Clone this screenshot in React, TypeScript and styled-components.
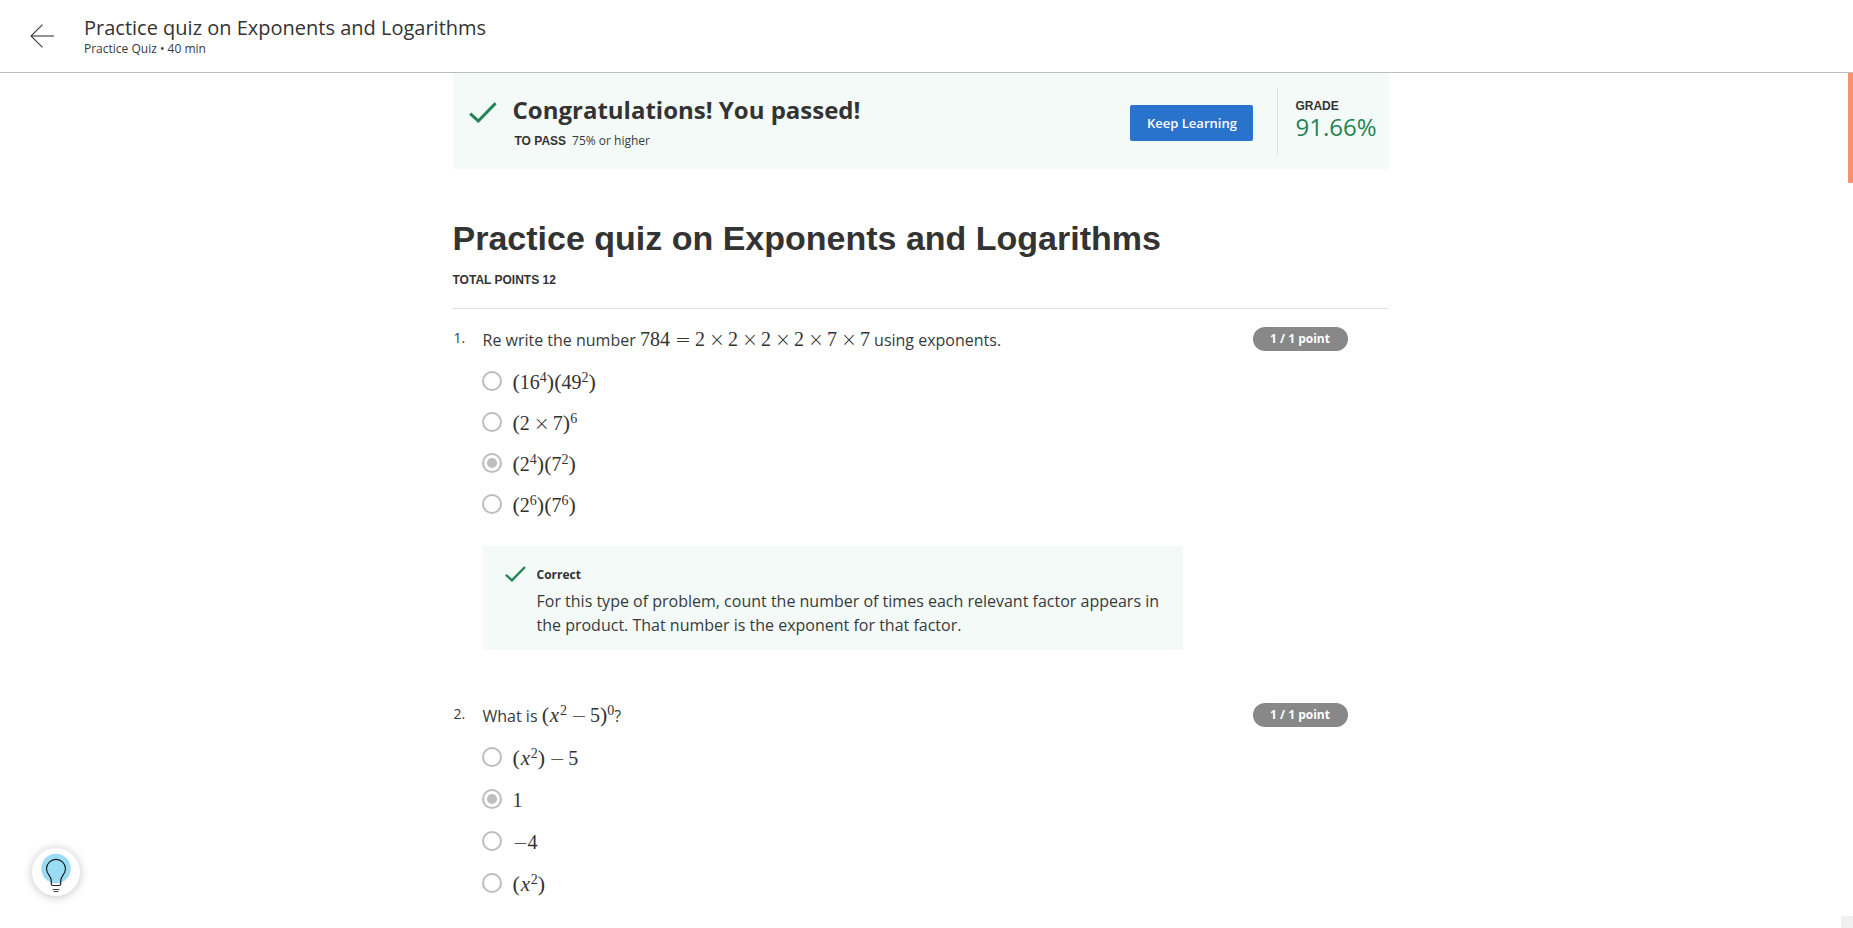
import React from "react";
import styled, { createGlobalStyle } from "styled-components";

const INK = "#373a3c";
const STRONG = "#333333";
const GREEN = "#1f8354";
const MINT = "#f4faf8";
const ARIAL = `"Liberation Sans", Arial, sans-serif`;

const GlobalStyle = createGlobalStyle`
  *, *::before, *::after { box-sizing: border-box; }
  body {
    margin: 0;
    background: #ffffff;
    color: ${INK};
    font-family: "Open Sans", sans-serif;
    font-size: 16px;
    line-height: 24px;
  }
  h1, h2, p, ol, fieldset { margin: 0; padding: 0; border: 0; }
`;

const Header = styled.header`
  display: flex;
  align-items: center;
  gap: 29px;
  height: 73px;
  padding: 0 30px;
  border-bottom: 1px solid #bdbdbd;
`;

const BackButton = styled.button`
  display: flex;
  padding: 0;
  border: 0;
  background: none;
  cursor: pointer;
`;

const HeaderText = styled.div`
  padding-top: 2px;
`;

const HeaderTitle = styled.p`
  font-size: 20px;
  line-height: 24px;
  color: ${STRONG};
`;

const HeaderMeta = styled.p`
  font-size: 12px;
  line-height: 18px;
`;

const Page = styled.div`
  padding-right: 12px;
`;

const Content = styled.main`
  max-width: 936px;
  margin: 0 auto;
`;

const Banner = styled.section`
  display: flex;
  align-items: center;
  height: 96px;
  padding: 0 12px 0 16px;
  background: ${MINT};
`;

const BannerMessage = styled.div`
  display: flex;
  flex: 1;
  align-items: flex-start;
  gap: 16px;
  padding-top: 2px;
`;

const BannerCheck = styled.div`
  display: flex;
  padding-top: 8px;
`;

const BannerTitle = styled.h2`
  font-size: 24px;
  line-height: 32px;
  font-weight: 700;
  color: ${STRONG};
`;

const PassLine = styled.p`
  display: flex;
  gap: 6px;
  padding: 6px 0 0 2px;
  font-size: 12px;
  line-height: 18px;
`;

const Caps = styled.strong`
  display: block;
  font-family: ${ARIAL};
  font-size: 12px;
  line-height: 18px;
  font-weight: 700;
  color: ${STRONG};
`;

const PrimaryButton = styled.button`
  height: 36px;
  width: 123px;
  margin-top: 4px;
  padding: 0;
  border: 0;
  border-radius: 2px;
  background: #2a73cc;
  color: #ffffff;
  font-family: inherit;
  font-size: 13px;
  font-weight: 600;
  cursor: pointer;
`;

const Grade = styled.div`
  display: flex;
  flex-direction: column;
  justify-content: center;
  height: 68px;
  margin-left: 24px;
  padding-left: 17px;
  padding-bottom: 6px;
  border-left: 1px solid #dcdfde;
`;

const GradeValue = styled.span`
  font-size: 24px;
  line-height: 24px;
  color: ${GREEN};
`;

const TitleBlock = styled.div`
  padding: 47px 0 19px;
  border-bottom: 1px solid #e1e1e1;
`;

const QuizTitle = styled.h1`
  margin-bottom: 11px;
  font-family: ${ARIAL};
  font-size: 34px;
  line-height: 44px;
  font-weight: 700;
  color: ${STRONG};
`;

const Questions = styled.ol`
  display: flex;
  flex-direction: column;
  gap: 53px;
  padding: 18px 0 24px;
  list-style: none;
`;

const Question = styled.li`
  display: flex;
  align-items: flex-start;
`;

const Ordinal = styled.span`
  width: 29px;
  padding-left: 1px;
  font-size: 14px;
  line-height: 22px;
`;

const Body = styled.fieldset`
  flex: 1;
  min-width: 0;
`;

const Prompt = styled.legend`
  display: block;
  height: 24px;
  padding: 0 0 0 1px;
  white-space: nowrap;
`;

const Options = styled.div<{ $row: number }>`
  display: grid;
  grid-auto-rows: ${(p) => p.$row}px;
  justify-items: start;
  padding-top: 9px;
`;

const Option = styled.label`
  display: flex;
  align-items: center;
  gap: 11px;
  cursor: pointer;
`;

const Radio = styled.input`
  appearance: none;
  display: grid;
  place-content: center;
  width: 20px;
  height: 20px;
  margin: 0;
  border: 2px solid #bdbdbd;
  border-radius: 50%;
  background: #ffffff;

  &:checked::before {
    content: "";
    width: 10px;
    height: 10px;
    border-radius: 50%;
    background: #bdbdbd;
  }
`;

const Points = styled.span`
  width: 95px;
  height: 24px;
  margin-right: 41px;
  border-radius: 12px;
  background: #888888;
  color: #ffffff;
  font-size: 12px;
  font-weight: 700;
  line-height: 24px;
  text-align: center;
`;

const Feedback = styled.section`
  display: flex;
  align-items: flex-start;
  gap: 11px;
  width: 700px;
  max-width: 100%;
  margin: 22px 0 0 1px;
  padding: 20px 20px 13px 22px;
  background: ${MINT};

  svg {
    flex-shrink: 0;
  }
`;

const FeedbackTitle = styled.strong`
  display: block;
  margin-bottom: 5px;
  font-size: 12px;
  line-height: 18px;
  color: ${STRONG};
`;

const Formula = styled.span`
  font-family: "Liberation Serif", serif;
  font-size: 20px;
  line-height: 24px;
  color: ${STRONG};
  white-space: nowrap;
`;

const OptionFormula = styled(Formula)`
  padding-top: 2px;
`;

const Paren = styled.span`
  font-size: 22px;
  line-height: 0;
`;

const Variable = styled.i`
  display: inline-block;
  width: 11px;
  font-size: 21px;
  line-height: 0;
  text-align: center;
`;

const Sup = styled.sup`
  font-size: 14px;
  line-height: 0;
  vertical-align: 7px;
`;

const Operator = styled.span<{ $gap: number }>`
  display: inline-block;
  width: 15px;
  margin: 0 ${(p) => p.$gap}px;
  font-family: "DejaVu Sans Light", "DejaVu Sans", sans-serif;
  font-weight: 200;
  font-size: 19px;
  line-height: 0;
  text-align: center;
`;

const HintButton = styled.button`
  position: fixed;
  left: 32px;
  bottom: 32px;
  width: 48px;
  height: 48px;
  padding: 0;
  border: 0;
  border-radius: 50%;
  background: #ffffff;
  box-shadow: 0 1px 10px rgba(0, 0, 0, 0.24);
  cursor: pointer;
`;

const ScrollThumb = styled.div`
  position: fixed;
  top: 73px;
  right: 0;
  width: 5px;
  height: 110px;
  border-radius: 0 0 1px 1px;
  background: #f7936c;
`;

const ScrollCorner = styled.div`
  position: fixed;
  right: 0;
  bottom: 0;
  width: 12px;
  height: 12px;
  background: #f0f0f0;
`;

const Check = ({ width, height, stroke }: { width: number; height: number; stroke: number }) => (
  <svg width={width} height={height} viewBox="0 0 28 21" aria-hidden="true">
    <path d="M1.2 11.6 L9.3 19 L26.6 1.2" fill="none" stroke={GREEN} strokeWidth={stroke} />
  </svg>
);

const Times = () => <Operator $gap={4}>×</Operator>;
const Minus = () => <Operator $gap={4}>−</Operator>;

const Group = ({ children, power }: { children: React.ReactNode; power?: number }) => (
  <>
    <Paren>(</Paren>
    {children}
    <Paren>)</Paren>
    {power !== undefined && <Sup>{power}</Sup>}
  </>
);

const XSquared = () => (
  <>
    <Variable>x</Variable>
    <Sup>2</Sup>
  </>
);

type Choice = { id: string; formula: React.ReactNode; checked?: boolean };

const powersOf = (a: number, m: number, b: number, n: number) => (
  <>
    <Group>
      {a}
      <Sup>{m}</Sup>
    </Group>
    <Group>
      {b}
      <Sup>{n}</Sup>
    </Group>
  </>
);

const rewriteChoices: Choice[] = [
  { id: "q1a", formula: powersOf(16, 4, 49, 2) },
  { id: "q1b", formula: <Group power={6}>2<Times />7</Group> },
  { id: "q1c", formula: powersOf(2, 4, 7, 2), checked: true },
  { id: "q1d", formula: powersOf(2, 6, 7, 6) },
];

const zeroPowerChoices: Choice[] = [
  { id: "q2a", formula: <><Group><XSquared /></Group><Minus />5</> },
  { id: "q2b", formula: "1", checked: true },
  { id: "q2c", formula: <><Operator $gap={0}>−</Operator>4</> },
  { id: "q2d", formula: <Group><XSquared /></Group> },
];

const ChoiceList = ({ name, choices, row }: { name: string; choices: Choice[]; row: number }) => (
  <Options $row={row}>
    {choices.map((c) => (
      <Option key={c.id} htmlFor={c.id}>
        <Radio type="radio" id={c.id} name={name} defaultChecked={c.checked} />
        <OptionFormula>{c.formula}</OptionFormula>
      </Option>
    ))}
  </Options>
);

export default function App() {
  return (
    <>
      <GlobalStyle />
      <Header>
        <BackButton aria-label="Back">
          <svg width="25" height="24" viewBox="0 0 25 24" fill="none" stroke={INK} strokeWidth="1.1">
            <path d="M12.5 0.7 L1 12 L12.5 23.3" />
            <path d="M1 12 H24" />
          </svg>
        </BackButton>
        <HeaderText>
          <HeaderTitle>Practice quiz on Exponents and Logarithms</HeaderTitle>
          <HeaderMeta>Practice Quiz • 40 min</HeaderMeta>
        </HeaderText>
      </Header>

      <Page>
        <Content>
          <Banner>
            <BannerMessage>
              <BannerCheck><Check width={28} height={21} stroke={3} /></BannerCheck>
              <div>
                <BannerTitle>Congratulations! You passed!</BannerTitle>
                <PassLine>
                  <Caps>TO PASS</Caps>
                  <span>75% or higher</span>
                </PassLine>
              </div>
            </BannerMessage>
            <PrimaryButton>Keep Learning</PrimaryButton>
            <Grade>
              <Caps>GRADE</Caps>
              <GradeValue>91.66%</GradeValue>
            </Grade>
          </Banner>

          <TitleBlock>
            <QuizTitle>Practice quiz on Exponents and Logarithms</QuizTitle>
            <Caps>TOTAL POINTS 12</Caps>
          </TitleBlock>

          <Questions>
            <Question>
              <Ordinal>1.</Ordinal>
              <Body>
                <Prompt>
                  Re write the number{" "}
                  <Formula>
                    784<Operator $gap={5}>=</Operator>
                    2<Times />2<Times />2<Times />2<Times />7<Times />7
                  </Formula>{" "}
                  using exponents.
                </Prompt>
                <ChoiceList name="rewrite" choices={rewriteChoices} row={41} />
                <Feedback>
                  <Check width={21} height={16} stroke={3} />
                  <div>
                    <FeedbackTitle>Correct</FeedbackTitle>
                    <p>
                      For this type of problem, count the number of times each relevant factor
                      appears in the product. That number is the exponent for that factor.
                    </p>
                  </div>
                </Feedback>
              </Body>
              <Points>1 / 1 point</Points>
            </Question>

            <Question>
              <Ordinal>2.</Ordinal>
              <Body>
                <Prompt>
                  What is{" "}
                  <Formula>
                    <Group power={0}><XSquared /><Minus />5</Group>
                  </Formula>
                  ?
                </Prompt>
                <ChoiceList name="zero-power" choices={zeroPowerChoices} row={42} />
              </Body>
              <Points>1 / 1 point</Points>
            </Question>
          </Questions>
        </Content>
      </Page>

      <HintButton aria-label="Hints">
        <svg width="48" height="48" viewBox="0 0 48 48" fill="none" aria-hidden="true">
          <circle cx="24" cy="20.5" r="14.8" fill="#9bdcf5" />
          <path
            d="M19.3 36 V32.5 C19.3 28 14.5 26.5 14.5 20.8 A9.5 9.5 0 0 1 33.5 20.8 C33.5 26.5 28.7 28 28.7 32.5 V36 Q28.7 37.5 27 37.5 H21 Q19.3 37.5 19.3 36 Z"
            stroke="#1f1f1f"
            strokeWidth="1.2"
          />
          <path d="M20.5 41.5 H27.5 M21.5 43.5 H26.5" stroke="#444444" strokeWidth="1" />
        </svg>
      </HintButton>
      <ScrollThumb />
      <ScrollCorner />
    </>
  );
}
